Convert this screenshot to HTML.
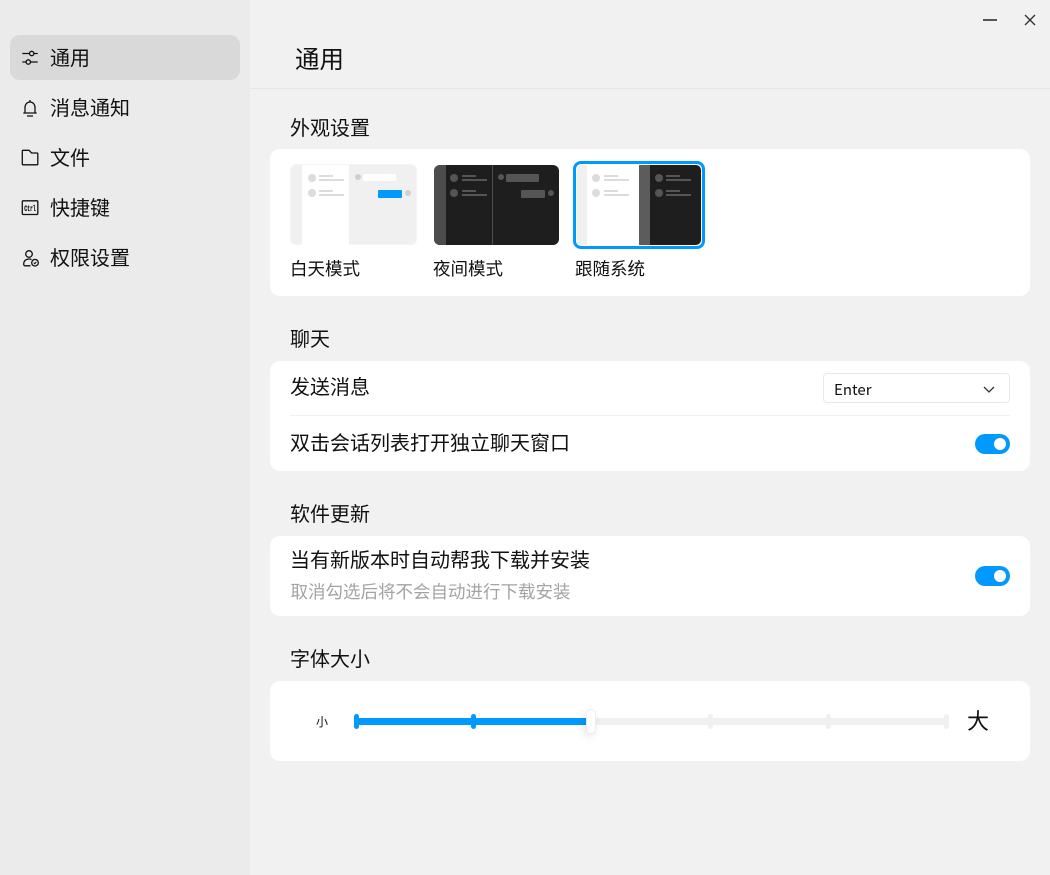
<!DOCTYPE html>
<html lang="zh"><head><meta charset="utf-8"><style>
*{box-sizing:border-box;margin:0;padding:0}
html,body{width:1050px;height:875px;overflow:hidden;background:#f1f1f1}
body{position:relative;font-family:"Liberation Sans","Noto Sans CJK SC",sans-serif;color:#1a1a1a}
.a{position:absolute}
.t{position:absolute;white-space:nowrap;line-height:28px;height:28px}
.side{left:0;top:0;width:250px;height:875px;background:#ebebeb}
.sel{left:10px;top:35px;width:230px;height:45px;background:#d9d9d9;border-radius:10px}
.nav{left:50px;font-size:20px;color:#111}
.ic{position:absolute;left:20px;width:20px;height:20px;fill:none;stroke:#111;stroke-width:1.3}
.h{left:290px;font-size:20px;color:#111}
.card{left:270px;width:760px;background:#fff;border-radius:10px}
.row{left:290px;font-size:20px;color:#111}
.sw{position:absolute;left:975px;width:35px;height:20px;border-radius:10px;background:#0099ff}
.sw i{position:absolute;right:4px;top:4px;width:12px;height:12px;border-radius:50%;background:#fff}
.th{position:absolute;top:165px;height:80px;border-radius:6px;overflow:hidden}
.th div{position:absolute}
.dot{width:8px;height:8px;border-radius:50%}
.l1{width:14px;height:2px}
.l2{width:25px;height:2px}
.m{font-size:17.5px;top:255px;color:#111}
</style></head><body>
<div class="a side"></div>
<div class="a sel"></div>
<svg class="ic" style="top:48px" viewBox="0 0 20 20"><path d="M2.300 5.500H9.500M14 5.500H17.700M2.300 14H6M10.500 14H17.700"/><circle cx="11.700" cy="5.500" r="2.200"/><circle cx="8.300" cy="14" r="2.200"/></svg>
<div class="t nav" style="top:45px">通用</div>
<svg class="ic" style="top:98px" viewBox="0 0 20 20"><path d="M5 15V9.500C5 6.500 7 4 10 4S15 6.500 15 9.500V15ZM3.300 15H16.700M7 18H13M10 2V4"/></svg>
<div class="t nav" style="top:95px">消息通知</div>
<svg class="ic" style="top:148px" viewBox="0 0 20 20"><path d="M2.300 3C2.300 2.500 2.600 2.300 3 2.300H9L11.500 5H17C17.500 5 17.800 5.300 17.800 5.800V16C17.800 16.500 17.500 16.800 17 16.800H3C2.600 16.800 2.300 16.500 2.300 16Z"/></svg>
<div class="t nav" style="top:145px">文件</div>
<svg class="ic" style="top:198px" viewBox="0 0 20 20"><rect x="2.300" y="2.800" width="15.500" height="13.700" rx="1"/><text x="10" y="13" font-family="Liberation Mono" font-size="8.500" font-weight="bold" text-anchor="middle" fill="#111" stroke="#111" stroke-width="0.250" textLength="11.500" lengthAdjust="spacingAndGlyphs">Ctrl</text></svg>
<div class="t nav" style="top:195px">快捷键</div>
<svg class="ic" style="top:248px" viewBox="0 0 20 20"><circle cx="9" cy="6" r="3.300"/><path d="M11.500 11.500C9 10.500 4.500 11 3.800 15C3.500 17 4 17.800 5 17.800H10.500"/><circle cx="15" cy="14.700" r="3.300"/><path d="M13.700 14.700L14.700 15.700L16.300 13.800" stroke-width="1"/></svg>
<div class="t nav" style="top:245px">权限设置</div>

<div class="a" style="left:983px;top:19px;width:14px;height:2px;background:#555"></div>
<svg class="a" style="left:1023px;top:13px" width="14" height="14" viewBox="0 0 14 14"><path d="M2 2L12 12M12 2L2 12" stroke="#333" stroke-width="1.400" fill="none"/></svg>

<div class="t" style="left:295px;top:46px;font-size:24.500px;line-height:30px;height:30px;color:#111">通用</div>
<div class="a" style="left:250px;top:88px;width:800px;height:1px;background:#e6e6e6"></div>

<div class="t h" style="top:115px">外观设置</div>
<div class="a card" style="top:149px;height:147px"></div>

<div class="th" style="left:290px;top:164px;height:81px;width:127px;background:#f0f0f0;box-shadow:inset 0 0 0 1px #f5f5f5">
<div style="left:12px;top:1px;width:47px;height:80px;background:#fff"></div>
<div class="dot" style="left:18px;top:10px;background:#dcdcdc"></div>
<div class="l1" style="left:29px;top:11px;background:#dcdcdc"></div>
<div class="l2" style="left:29px;top:15px;background:#dcdcdc"></div>
<div class="dot" style="left:18px;top:25px;background:#dcdcdc"></div>
<div class="l1" style="left:29px;top:26px;background:#dcdcdc"></div>
<div class="l2" style="left:29px;top:30px;background:#dcdcdc"></div>
<div class="dot" style="left:65px;top:10px;width:6px;height:6px;background:#cfcfcf"></div>
<div style="left:73px;top:10px;width:33px;height:7px;background:#fff;border-radius:1px"></div>
<div style="left:88px;top:26px;width:24px;height:8px;background:#0099ff;border-radius:1px"></div>
<div class="dot" style="left:115px;top:26px;width:6px;height:6px;background:#cfcfcf"></div>
</div>
<div class="t m" style="left:290px">白天模式</div>

<div class="th" style="left:434px;width:125px;background:#1e1e1e">
<div style="left:0;top:0;width:12px;height:80px;background:#4c4c4c"></div>
<div style="left:58px;top:0;width:1px;height:80px;background:#4c4c4c"></div>
<div class="dot" style="left:16px;top:9px;background:#555"></div>
<div class="l1" style="left:28px;top:10px;background:#555"></div>
<div class="l2" style="left:28px;top:14px;background:#555"></div>
<div class="dot" style="left:16px;top:24px;background:#555"></div>
<div class="l1" style="left:28px;top:25px;background:#555"></div>
<div class="l2" style="left:28px;top:29px;background:#555"></div>
<div class="dot" style="left:64px;top:9px;width:6px;height:6px;background:#555"></div>
<div style="left:72px;top:9px;width:33px;height:8px;background:#555;border-radius:1px"></div>
<div style="left:87px;top:25px;width:24px;height:8px;background:#555;border-radius:1px"></div>
<div class="dot" style="left:114px;top:25px;width:6px;height:6px;background:#555"></div>
</div>
<div class="t m" style="left:433px">夜间模式</div>

<div class="a" style="left:573px;top:161px;width:132px;height:88px;border:3px solid #0099ff;border-radius:8px;background:#fff"></div>
<div class="th" style="left:577px;width:124px;background:#fff;border-radius:5px">
<div style="left:0;top:0;width:10px;height:80px;background:#f0f0f0"></div>
<div style="left:62px;top:0;width:11px;height:80px;background:#5c5c5c"></div>
<div style="left:73px;top:0;width:51px;height:80px;background:#1e1e1e"></div>
<div class="dot" style="left:15px;top:9px;background:#dcdcdc"></div>
<div class="l1" style="left:26.500px;top:10px;background:#dcdcdc"></div>
<div class="l2" style="left:26.500px;top:14px;background:#dcdcdc"></div>
<div class="dot" style="left:15px;top:24px;background:#dcdcdc"></div>
<div class="l1" style="left:26.500px;top:25px;background:#dcdcdc"></div>
<div class="l2" style="left:26.500px;top:29px;background:#dcdcdc"></div>
<div class="dot" style="left:78px;top:9px;background:#555"></div>
<div class="l1" style="left:89px;top:10px;background:#555"></div>
<div class="l2" style="left:89px;top:14px;background:#555"></div>
<div class="dot" style="left:78px;top:24px;background:#555"></div>
<div class="l1" style="left:89px;top:25px;background:#555"></div>
<div class="l2" style="left:89px;top:29px;background:#555"></div>
</div>
<div class="t m" style="left:575px">跟随系统</div>

<div class="t h" style="top:326px">聊天</div>
<div class="a card" style="top:361px;height:110px"></div>
<div class="t row" style="top:374px">发送消息</div>
<div class="a" style="left:823px;top:373px;width:187px;height:30px;border:1px solid #e8e8e8;border-radius:4px;background:#fff"></div>
<div class="t" style="left:834px;top:376px;font-size:15px;color:#111;font-family:'Noto Sans CJK SC',sans-serif">Enter</div>
<svg class="a" style="left:982px;top:385px" width="14" height="10" viewBox="0 0 14 10"><path d="M2 2L7 7L12 2" stroke="#333" stroke-width="1.300" fill="none"/></svg>
<div class="a" style="left:290px;top:415px;width:720px;height:1px;background:#f0f0f0"></div>
<div class="t row" style="top:430px">双击会话列表打开独立聊天窗口</div>
<div class="sw" style="top:434px"><i></i></div>

<div class="t h" style="top:501px">软件更新</div>
<div class="a card" style="top:536px;height:80px"></div>
<div class="t row" style="top:547px">当有新版本时自动帮我下载并安装</div>
<div class="t" style="left:290.500px;top:578px;font-size:17.500px;color:#a3a3a3">取消勾选后将不会自动进行下载安装</div>
<div class="sw" style="top:566px"><i></i></div>

<div class="t h" style="top:646px">字体大小</div>
<div class="a card" style="top:681px;height:80px"></div>
<div class="t" style="left:316px;top:708px;font-size:12px;color:#111">小</div>
<div class="a" style="left:356px;top:718px;width:592px;height:7px;background:#f0f0f0"></div>
<div class="a" style="left:356px;top:718px;width:230px;height:7px;background:#0099ff"></div>
<div class="a" style="left:354px;top:714px;width:5px;height:15px;border-radius:2.500px;background:#0099ff"></div>
<div class="a" style="left:471px;top:714px;width:5px;height:15px;border-radius:2.500px;background:#0099ff"></div>
<div class="a" style="left:708px;top:714px;width:5px;height:15px;border-radius:2.500px;background:#f0f0f0"></div>
<div class="a" style="left:826px;top:714px;width:5px;height:15px;border-radius:2.500px;background:#f0f0f0"></div>
<div class="a" style="left:944px;top:714px;width:5px;height:15px;border-radius:2.500px;background:#f0f0f0"></div>
<div class="a" style="left:586px;top:709px;width:10px;height:25px;border-radius:5px;background:#fff;border:1px solid #eee;box-shadow:-2px 3px 8px rgba(0,0,0,.1)"></div>
<div class="t" style="left:967px;top:708px;font-size:22px;color:#111">大</div>
</body></html>
